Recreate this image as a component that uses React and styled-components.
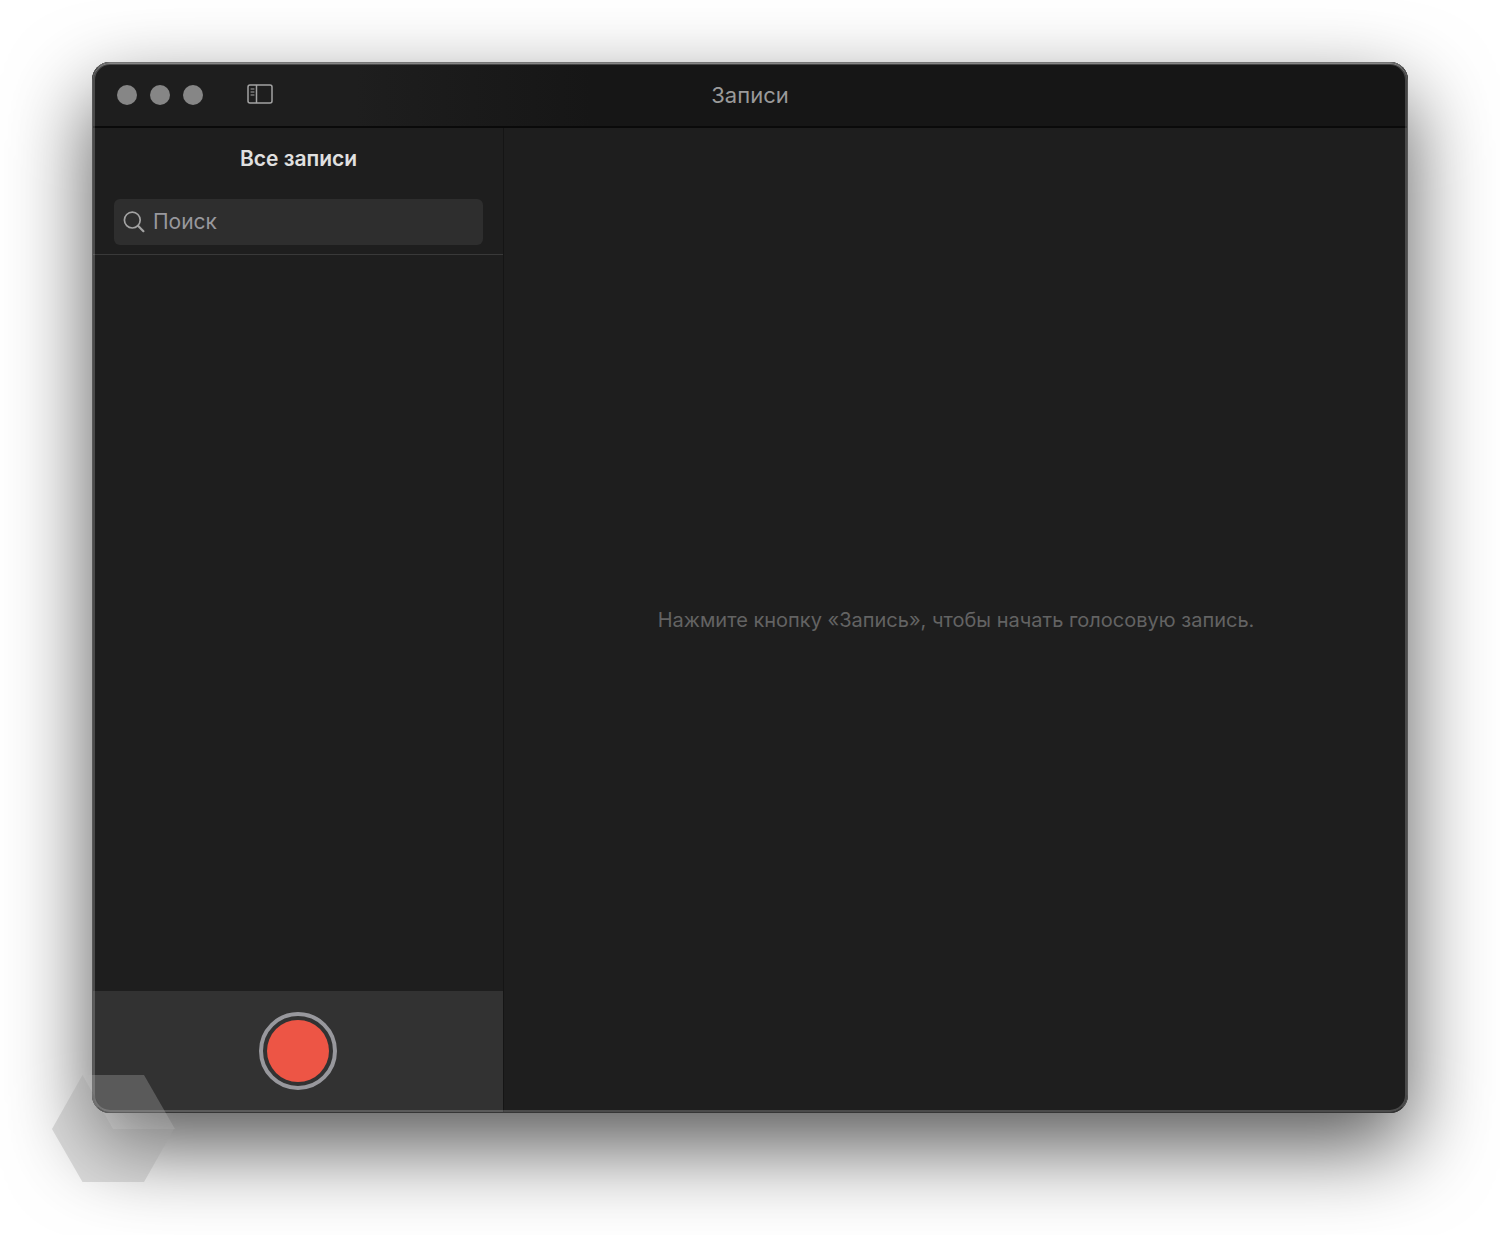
import { useState } from "react";
import styled, { createGlobalStyle } from "styled-components";

const GlobalStyle = createGlobalStyle`
  * {
    box-sizing: border-box;
  }

  body {
    margin: 0;
    background: #ffffff;
    font-family: Inter, "Liberation Sans", sans-serif;
  }
`;

const Desktop = styled.div`
  display: flex;
  min-height: 100vh;
  padding: 62px 92px 122px;
  overflow: hidden;
`;

const Window = styled.div`
  position: relative;
  flex: 1;
  display: flex;
  flex-direction: column;
  border-radius: 18px;
  background: #1e1e1e;
  box-shadow: 0 34px 84px rgba(0, 0, 0, 0.66);

  &::after {
    content: "";
    position: absolute;
    inset: 0;
    border: 1px solid #585858;
    border-top-color: #767676;
    border-bottom-color: #363636;
    border-radius: 18px;
    box-shadow:
      inset 0 1px 0 #868686,
      inset 0 0 0 2px rgba(255, 255, 255, 0.2);
    pointer-events: none;
  }
`;

const TitleBar = styled.header`
  display: grid;
  grid-template-columns: 1fr auto 1fr;
  align-items: center;
  height: 66px;
  padding: 2px 25px 0;
  border-bottom: 2px solid #0a0a0a;
  border-radius: 18px 18px 0 0;
  background: linear-gradient(90deg, #1e1e1e 20%, #161616 38%);
`;

const TitleTools = styled.div`
  display: flex;
  align-items: center;
  gap: 44px;
`;

const TrafficLights = styled.div`
  display: flex;
  gap: 13px;
`;

const Light = styled.button`
  width: 20px;
  height: 20px;
  padding: 0;
  border: 0;
  border-radius: 50%;
  background: #868686;
`;

const SidebarToggle = styled.button`
  display: flex;
  padding: 0 0 2px;
  border: 0;
  background: none;
  color: #a3a3a3;
`;

const Title = styled.h1`
  margin: 0;
  color: #9a9a9a;
  font-size: 22px;
  font-weight: 400;
  line-height: 28px;
`;

const Body = styled.div`
  flex: 1;
  display: flex;
`;

const Sidebar = styled.aside`
  flex: 0 0 412px;
  display: flex;
  flex-direction: column;
  min-width: 0;
  border-right: 1px solid #151515;
`;

const SidebarHead = styled.div`
  display: flex;
  flex-direction: column;
  gap: 26px;
  padding: 17px 20px 9px 22px;
  border-bottom: 1px solid #393939;
`;

const SidebarTitle = styled.h2`
  margin: 0;
  color: #e0e0e0;
  font-size: 21px;
  font-weight: 600;
  line-height: 28px;
  text-align: center;
`;

const SearchField = styled.label`
  display: flex;
  align-items: center;
  gap: 8px;
  height: 46px;
  padding: 0 9px;
  border-radius: 6px;
  background: #2e2e2e;
  color: #a3a3a3;
`;

const SearchInput = styled.input`
  flex: 1;
  width: 100%;
  min-width: 0;
  padding: 0;
  border: 0;
  outline: 0;
  background: none;
  color: #e0e0e0;
  font-family: inherit;
  font-size: 21px;
  line-height: 28px;

  &::placeholder {
    color: #98989d;
    opacity: 1;
  }
`;

const Recordings = styled.div`
  flex: 1;
`;

const RecordBar = styled.footer`
  display: flex;
  justify-content: center;
  align-items: center;
  height: 122px;
  padding-bottom: 2px;
  border-radius: 0 0 0 18px;
  background: #323232;
`;

const RecordButton = styled.button`
  width: 78px;
  height: 78px;
  padding: 4px;
  border: 4px solid #98989d;
  border-radius: 50%;
  background: #ed5545 content-box;
`;

const Main = styled.main`
  flex: 1;
  display: flex;
  justify-content: center;
  align-items: center;
  padding-bottom: 2px;
`;

const Hint = styled.p`
  margin: 0;
  color: #636363;
  font-size: 20px;
  line-height: 28px;
`;

const Watermark = styled.svg`
  position: absolute;
  left: -40px;
  bottom: -69px;
  z-index: 1;
  pointer-events: none;
`;

const SidebarIcon = () => (
  <svg width="26" height="20" viewBox="0 0 26 20" fill="none" stroke="currentColor" aria-hidden="true">
    <rect x="1" y="1" width="24" height="18" rx="2" strokeWidth="1.5" />
    <path d="M9.5 1v18" strokeWidth="1.5" />
    <path d="M3.6 5h3.8M3.6 8h3.8M3.6 11h3.8" strokeWidth="1.2" />
  </svg>
);

const SearchIcon = () => (
  <svg width="22" height="22" viewBox="0 0 22 22" fill="none" stroke="currentColor" aria-hidden="true">
    <circle cx="9.3" cy="9.1" r="7.9" strokeWidth="1.7" />
    <path d="M15 14.8l5.4 5.4" strokeWidth="2.2" strokeLinecap="round" />
  </svg>
);

const App = () => {
  const [query, setQuery] = useState("");

  return (
    <>
      <GlobalStyle />
      <Desktop>
        <Window>
          <TitleBar>
            <TitleTools>
              <TrafficLights>
                <Light aria-label="Закрыть" />
                <Light aria-label="Свернуть" />
                <Light aria-label="Развернуть" />
              </TrafficLights>
              <SidebarToggle aria-label="Боковое меню">
                <SidebarIcon />
              </SidebarToggle>
            </TitleTools>
            <Title>Записи</Title>
          </TitleBar>
          <Body>
            <Sidebar>
              <SidebarHead>
                <SidebarTitle>Все записи</SidebarTitle>
                <SearchField>
                  <SearchIcon />
                  <SearchInput
                    type="text"
                    placeholder="Поиск"
                    aria-label="Поиск"
                    value={query}
                    onChange={(event) => setQuery(event.target.value)}
                  />
                </SearchField>
              </SidebarHead>
              <Recordings />
              <RecordBar>
                <RecordButton aria-label="Запись" />
              </RecordBar>
            </Sidebar>
            <Main>
              <Hint>Нажмите кнопку «Запись», чтобы начать голосовую запись.</Hint>
            </Main>
          </Body>
          <Watermark width="123" height="107" viewBox="0 0 123 107" aria-hidden="true">
            <path d="M30.5 0L61 54h61L92 107H30.5L0 54z" fill="#a0a0a0" fillOpacity="0.36" />
            <path d="M30.5 0H92l31 54H61z" fill="#b8b8b8" fillOpacity="0.3" />
          </Watermark>
        </Window>
      </Desktop>
    </>
  );
};

export default App;
